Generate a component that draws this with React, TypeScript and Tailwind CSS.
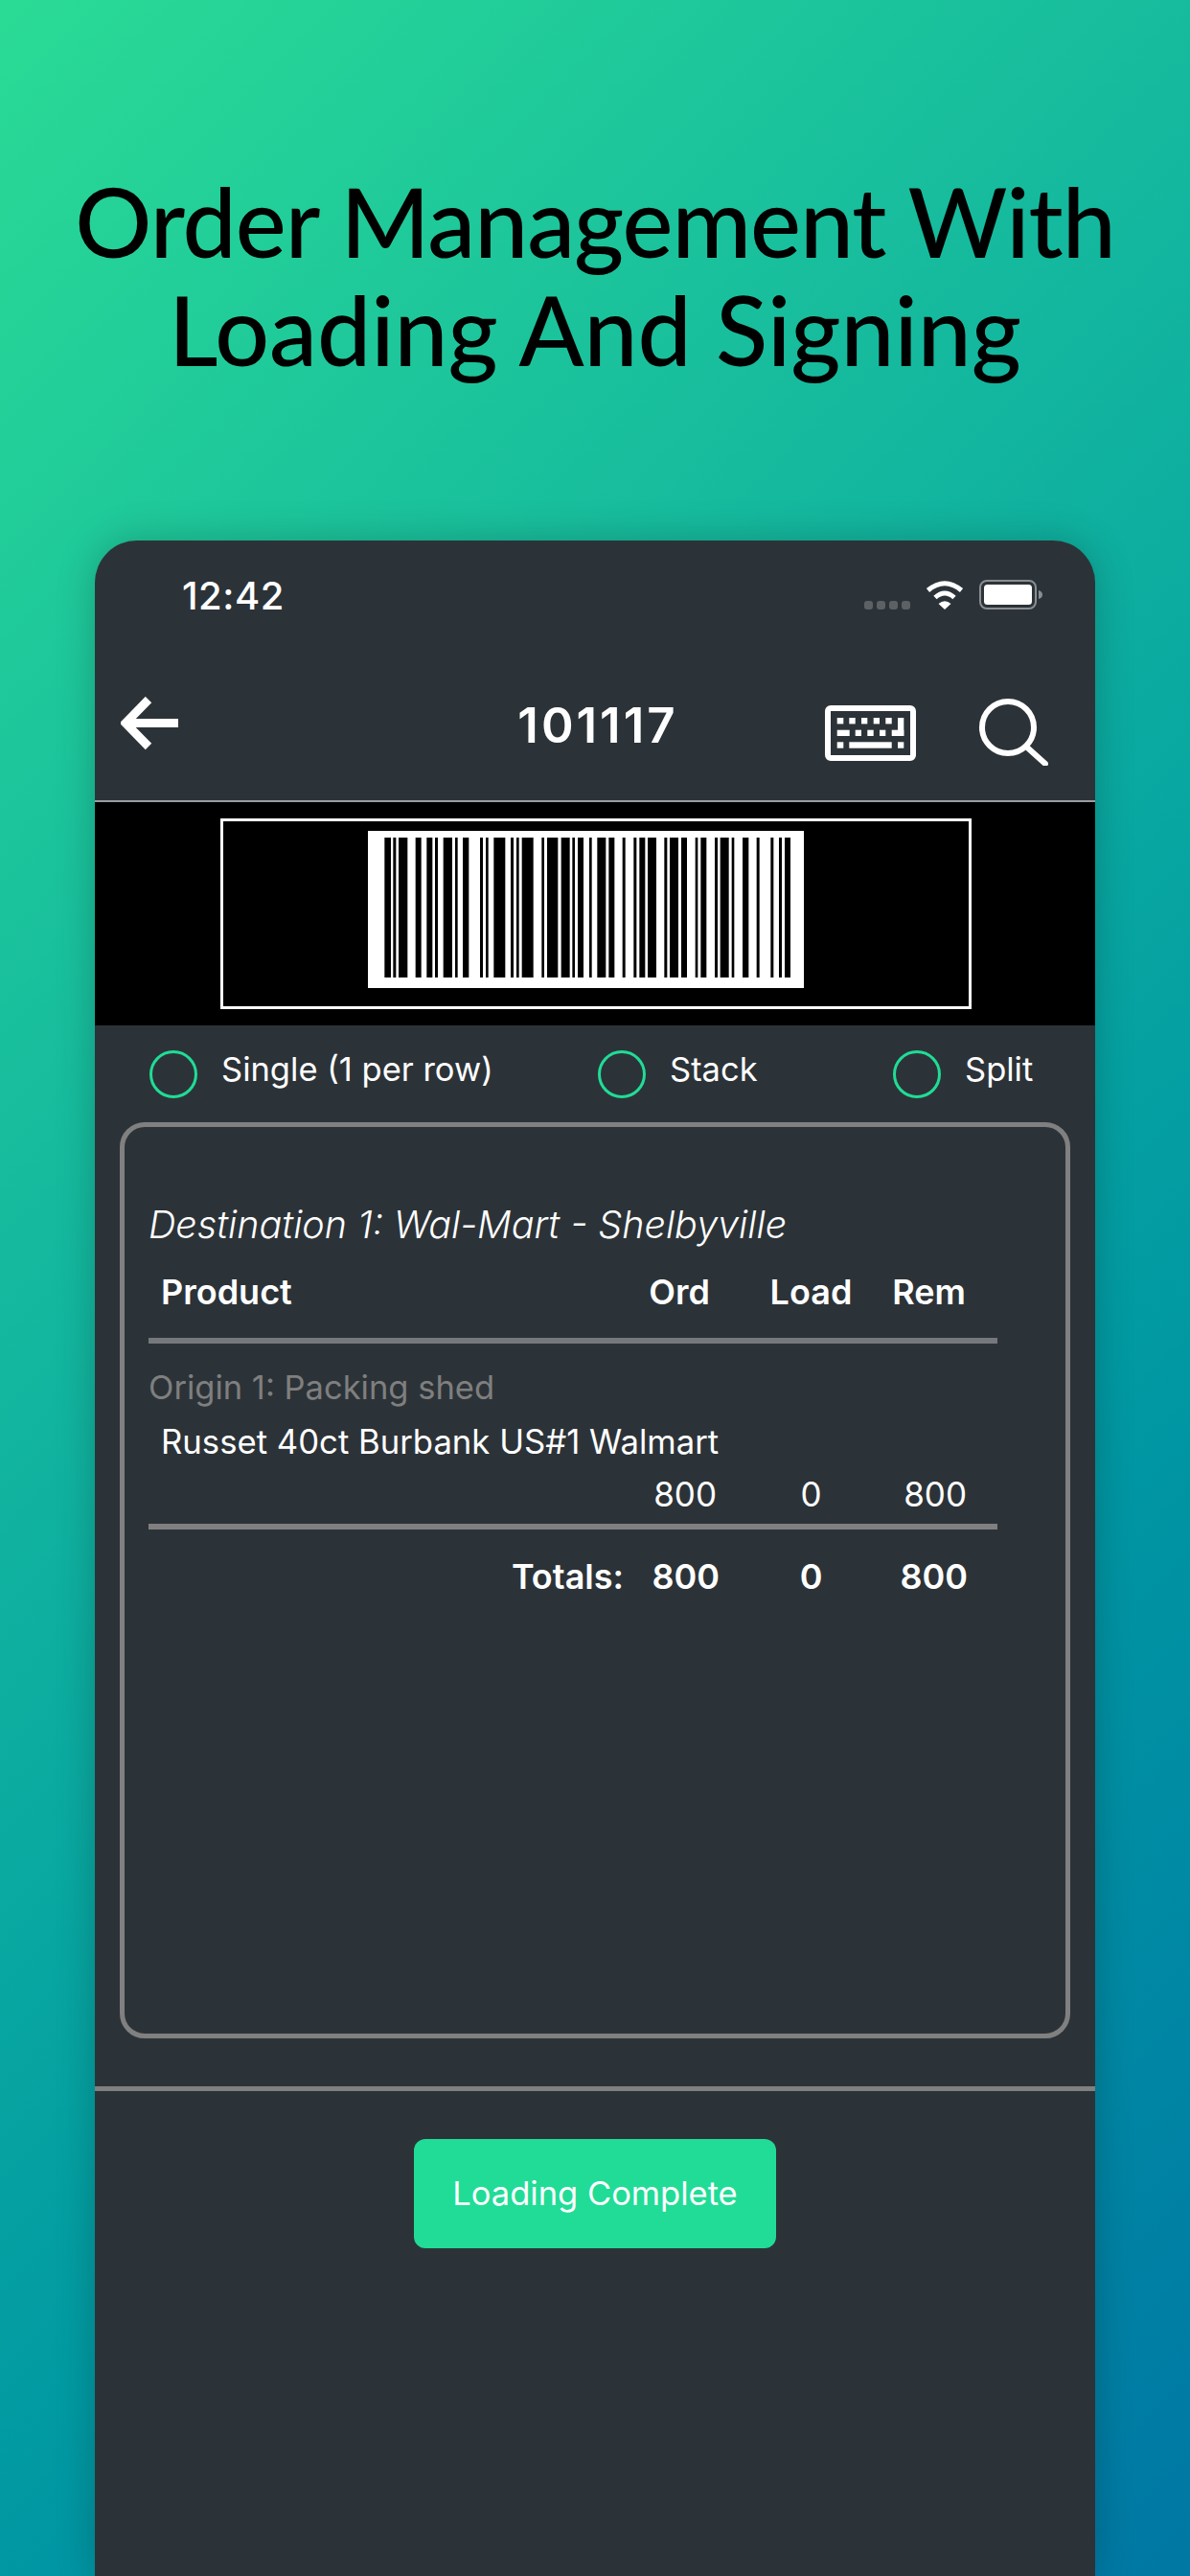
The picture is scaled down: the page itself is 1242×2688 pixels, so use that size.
const BARS: [number, number][] = [[124,144],[151,160],[168,196],[221,239],[256,274],[282,291],[308,336],[345,353],[369,388],[423,432],[441,449],[466,502],[519,528],[537,545],[554,590],[616,624],[633,667],[677,704],[712,720],[729,747],[765,773],[790,817],[826,844],[869,878],[904,913],[922,940],[948,975],[1000,1009],[1017,1044],[1053,1071],[1097,1105],[1114,1132],[1158,1167],[1175,1202],[1211,1219],[1245,1264],[1289,1298],[1333,1342],[1359,1368],[1377,1395]];

function Keyboard() {
  const keys: [number, number, number, number][] = [
    [12.7,13,6.6,6.4],[25.3,13,6.4,6.4],[38,13,6.3,6.4],[50.7,13,6.3,6.4],[63.3,13,6.4,6.4],
    [76,13,6.3,19],[69.7,25.7,12.6,6.3],
    [12.7,25.7,13,6.3],[31.7,25.7,6.3,6.3],[44.3,25.7,6.4,6.3],[57,25.7,6.3,6.3],
    [12.7,38.3,6.6,6.4],[25.3,38.3,44.4,6.4],[76,38.3,6.3,6.4],
  ];
  return (
    <svg width="95" height="58" viewBox="0 0 95 58" className="block">
      <rect x="3" y="3" width="89" height="52" rx="3" fill="none" stroke="#fff" strokeWidth="6" />
      {keys.map((k, i) => <rect key={i} x={k[0]} y={k[1]} width={k[2]} height={k[3]} fill="#fff" />)}
    </svg>
  );
}

function Radio({ label, className }: { label: string; className: string }) {
  return (
    <div className={`flex items-start ${className}`}>
      <div className="w-[50px] h-[50px] rounded-full border-[3px] border-[#20dc96] shrink-0 mt-[26px]" />
      <span className="ml-[25px] text-[34.5px] leading-[50px] mt-[21px] text-white">{label}</span>
    </div>
  );
}

const row = "grid grid-cols-[496px_100px_188px_71px] text-white";

export default function App() {
  return (
    <div
      className="w-[1242px] h-[2688px] overflow-hidden flex flex-col bg-linear-135 from-[#2adb95] to-[#0077a4] text-white"
      style={{ fontFamily: "Inter, 'Liberation Sans', sans-serif" }}
    >
      <h1
        className="text-center text-black text-[100px] leading-[114px] font-medium h-[564px] pt-[173px]"
        style={{ fontFamily: "Lato, 'Open Sans', sans-serif" }}
      >
        <div className="tracking-[-1px]">Order Management With</div>
        <div className="tracking-[0px] -mt-[1px]">Loading And Signing</div>
      </h1>

      <div className="mx-[99px] flex-1 bg-[#2c3338] rounded-t-[44px] shadow-[0_0_40px_rgba(0,0,0,0.22)] flex flex-col">
        {/* Status bar */}
        <div className="h-[100px] flex items-start pl-[91px] pr-[55px]">
          <span className="text-[40px] leading-[48px] font-medium tracking-[0.5px] mt-[34px]">12:42</span>
          <div className="ml-auto flex items-start mt-[41px]">
            <div className="flex gap-[4px] mt-[22px] mr-[16px]">
              <div className="w-[9px] h-[9px] rounded-[3px] bg-[#5c6166]" />
              <div className="w-[9px] h-[9px] rounded-[3px] bg-[#5c6166]" />
              <div className="w-[9px] h-[9px] rounded-[3px] bg-[#5c6166]" />
              <div className="w-[9px] h-[9px] rounded-[3px] bg-[#5c6166]" />
            </div>
            <svg width="40" height="31" viewBox="0 0 40 31" className="block">
              <path d="M2.5 11 Q20 -3.5 37.5 11" fill="none" stroke="#fff" strokeWidth="5" />
              <path d="M10 18.5 Q20 9.5 30 18.5" fill="none" stroke="#fff" strokeWidth="5" />
              <path d="M13.5 25 Q20 19.5 26.5 25 L20 31 Z" fill="#fff" />
            </svg>
            <svg width="66" height="31" viewBox="0 0 66 31" className="block ml-[16px]">
              <rect x="1" y="1" width="58" height="29" rx="7" fill="none" stroke="#8a8e92" strokeWidth="2" />
              <rect x="5" y="5" width="50" height="21" rx="3.5" fill="#fff" />
              <path d="M62 11 Q66 12 66 15.5 Q66 19 62 20 Z" fill="#8a8e92" />
            </svg>
          </div>
        </div>

        {/* Nav bar */}
        <div className="h-[171px] border-b-[2px] border-[#9a9ea2] box-content flex items-start relative">
          <svg width="60" height="56" viewBox="0 0 60 56" className="block ml-[27px] mt-[63px]">
            <path d="M29 3 L5 27.5 L29 52" fill="none" stroke="#fff" strokeWidth="9" />
            <path d="M6 27.5 H60" fill="none" stroke="#fff" strokeWidth="9" />
          </svg>
          <span className="absolute left-[6px] right-0 text-center top-[63px] text-[51px] leading-[60px] font-semibold tracking-[3px]">101117</span>
          <div className="ml-auto mr-[49px] flex items-start">
            <div className="mt-[72px]"><Keyboard /></div>
            <svg width="72" height="70" viewBox="0 0 72 70" className="block ml-[66px] mt-[65px]">
              <circle cx="30" cy="30" r="27" fill="none" stroke="#fff" strokeWidth="6" />
              <path d="M49 50 L69 68" fill="none" stroke="#fff" strokeWidth="6" strokeLinecap="round" />
            </svg>
          </div>
        </div>

        {/* Barcode band */}
        <div className="h-[233px] bg-black flex justify-start pl-[131px] pt-[17px]">
          <div className="w-[784px] h-[199px] border-[3px] border-white flex justify-start pl-[151px] pt-[10px]">
            <div className="w-[455px] h-[164px] bg-white">
              <svg width="455" height="164" viewBox="0 0 455 164" className="block">
                {BARS.map(([a, b], i) => (
                  <rect key={i} x={(a - 72) / 3} y={7} width={(b - a) / 3} height={146} fill="#000" />
                ))}
              </svg>
            </div>
          </div>
        </div>

        {/* Radios */}
        <div className="h-[101px] flex pl-[57px]">
          <Radio label="Single (1 per row)" className="w-[468px]" />
          <Radio label="Stack" className="w-[308px]" />
          <Radio label="Split" className="" />
        </div>

        {/* Card */}
        <div className="mx-[26px] h-[956px] border-[5px] border-[#808080] rounded-[26px] pl-[25px] pt-[72px]">
          <div className="w-[886px]">
            <div className="text-[39.5px] leading-[60px] italic font-light">Destination 1: Wal-Mart - Shelbyville</div>
            <div className={`${row} text-[36px] leading-[50px] font-semibold mt-[15px] h-[73px]`}>
              <div className="pl-[13px]">Product</div>
              <div className="text-right pr-[10px]">Ord</div>
              <div className="text-center pl-[3px]">Load</div>
              <div className="text-right pr-[2px] -ml-[30px]">Rem</div>
            </div>
            <div className="h-[6px] bg-[#75787c]" />
            <div className="text-[34.5px] leading-[50px] text-[#7f7f7f] mt-[21px]">Origin 1: Packing shed</div>
            <div className="text-[34.7px] leading-[50px] pl-[13px] mt-[6px]">Russet 40ct Burbank US#1 Walmart</div>
            <div className={`${row} text-[35px] leading-[50px] mt-[5px] h-[56px]`}>
              <div />
              <div className="text-right pr-[3px]">800</div>
              <div className="text-center pl-[3px]">0</div>
              <div className="text-right pr-[1px]">800</div>
            </div>
            <div className="h-[6px] bg-[#808080]" />
            <div className={`${row} text-[36px] leading-[50px] font-semibold mt-[24px]`}>
              <div className="text-right">Totals:</div>
              <div className="text-right">800</div>
              <div className="text-center pl-[3px]">0</div>
              <div className="text-right">800</div>
            </div>
          </div>
        </div>

        <div className="h-[5px] bg-[#808080] mt-[50px]" />

        <div className="flex justify-center mt-[50px]">
          <button className="w-[378px] h-[114px] rounded-[12px] bg-[#20dc96] text-white text-[34.5px] font-normal">
            Loading Complete
          </button>
        </div>
      </div>
    </div>
  );
}
